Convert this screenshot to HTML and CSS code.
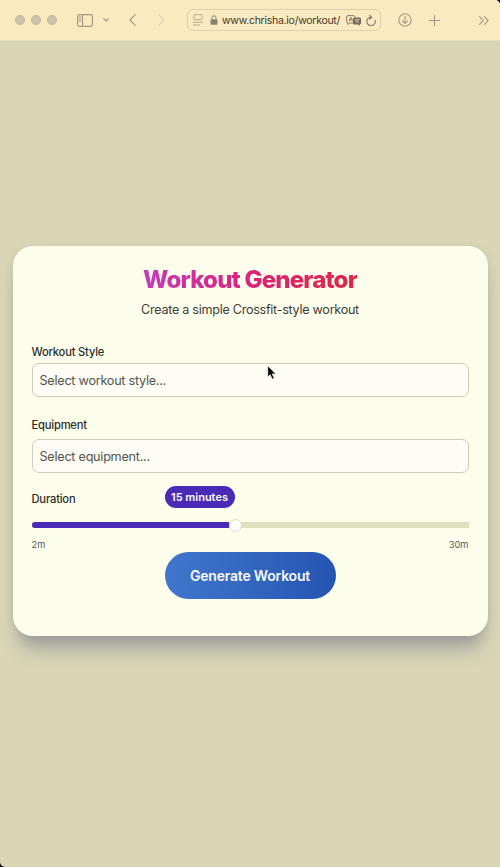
FILE: index.html
```html
<!DOCTYPE html>
<html lang="en">
<head>
<meta charset="utf-8">
<title>Workout Generator</title>
<link rel="stylesheet" href="styles.css">
</head>
<body>
<div class="window">
  <header class="toolbar">
    <div class="lights"><i></i><i></i><i></i></div>
    <svg class="sidebar" width="16" height="13" viewBox="0 0 16 13"><rect x=".6" y=".6" width="14.8" height="11.8" rx="1.8"/><path d="M5.5 .6v11.8M2.3 3h1.5M2.3 5h1.5M2.3 7h1.5"/></svg>
    <svg class="caret" width="6" height="4" viewBox="0 0 6 4"><path d="M.7 .7 3 3 5.3 .7"/></svg>
    <svg class="back" width="7" height="12" viewBox="0 0 7 12"><path d="M6.2 .6 1 6l5.200 5.400"/></svg>
    <svg class="forward" width="7" height="12" viewBox="0 0 7 12"><path d="M.8.6 6 6 .8 11.400"/></svg>
    <div class="address">
      <svg class="reader" width="10" height="12" viewBox="0 0 10 12"><rect x=".9" y=".6" width="8.200" height="5" rx="1"/><path d="M.2 8.300h9.600M.2 11h6.300"/></svg>
      <svg class="lock" width="8" height="10" viewBox="0 0 8 10"><rect x=".5" y="4.300" width="7" height="5.500" rx="1"/><path d="M2 5V2.900a2 2 0 0 1 4 0V5"/></svg>
      <span class="url">www.chrisha.io/workout/</span>
      <svg class="translate" width="16" height="11" viewBox="0 0 16 11"><path d="M7 8H3.500L2 9.500V8a1.500 1.500 0 0 1-1.400-1.500v-4.500A1.500 1.500 0 0 1 2 .6h5.500A1.500 1.500 0 0 1 9 2M3 6.200l1.800-4 1.400 3M3.600 5h2.500"/><path class="fill" d="M8.500 2.500h5A1.500 1.500 0 0 1 15 4v4a1.500 1.500 0 0 1-1.300 1.500v1.300L12 9.500H8.500A1.500 1.500 0 0 1 7 8V4a1.500 1.500 0 0 1 1.500-1.500z"/><path class="mark" d="M8.800 4.800h4.500M11 3.800v1M9.500 8l3-3M9.700 5.500 12.800 8"/></svg>
      <svg class="reload" width="10" height="11" viewBox="0 0 10 11"><path d="M9.100 5.300A4.200 4.200 0 1 1 5.400 2.300M3.700.5l2 1.900-2 1.900"/></svg>
    </div>
    <svg class="download" width="14" height="14" viewBox="0 0 14 14"><circle cx="7" cy="7" r="6.200"/><path d="M7 3.300v7M4.400 7.800 7 10.400l2.600-2.600"/></svg>
    <svg class="plus" width="11" height="11" viewBox="0 0 11 11"><path d="M5.500 .3v10.400M.3 5.500h10.400"/></svg>
    <svg class="more" width="10" height="9" viewBox="0 0 10 9"><path d="m.6.600 3.700 3.900L.6 8.400M5.400.600l3.700 3.900-3.700 3.900"/></svg>
  </header>
  <main class="page">
    <section class="card">
      <h1><span>Workout Generator</span></h1>
      <p class="subtitle">Create a simple Crossfit-style workout</p>
      <div class="field">
        <label>Workout Style</label>
        <div class="select">Select workout style...</div>
      </div>
      <div class="field equipment">
        <label>Equipment</label>
        <div class="select">Select equipment...</div>
      </div>
      <div class="duration"><label>Duration</label><span class="badge">15 minutes</span></div>
      <div class="track"><div class="progress"></div><div class="thumb"></div></div>
      <div class="limits"><span>2m</span><span>30m</span></div>
      <button>Generate Workout</button>
    </section>
  </main>
  <svg class="cursor" width="10" height="15" viewBox="0 0 10 15"><path d="M.7.800v11.300l2.500-2.300 2 4.400 2.100-.9-2-4.300h3.500z"/></svg>
</div>
</body>
</html>
```
FILE: styles.css
```css
* { box-sizing: border-box; }
html { background: #000; }
body { margin: 0; font-family: Inter, "Liberation Sans", sans-serif; color: #333; }
.window { position: relative; width: 500px; height: 867px; border-radius: 0 5px 0 5px; overflow: hidden; background: #d8d6b5; display: flex; flex-direction: column; }
svg { display: block; flex: none; fill: none; stroke: #a39885; stroke-width: 1.1; stroke-linecap: round; stroke-linejoin: round; }
.toolbar { height: 41px; flex: none; display: flex; align-items: center; padding: 0 11px 0 15px; background: #fbe9c0; border-bottom: 1px solid #e7dcb9; }
.lights { display: flex; gap: 6px; }
.lights i { width: 10px; height: 10px; border-radius: 50%; background: #cdc2ac; border: 1px solid #bfb49f; }
.sidebar { margin-left: 20px; }
.caret { margin-left: 10px; }
.back { margin-left: 20px; }
.forward { margin-left: 22px; stroke: #dccfb5; }
.address { width: 194px; height: 22px; margin-left: 22px; border: 1px solid #decfae; border-radius: 6px; display: flex; align-items: center; padding: 0 4px 0 5px; font-size: 10.500px; letter-spacing: -.27px; color: #3f392f; }
.reader { stroke: #b5aa93; stroke-width: 1; }
.lock { margin-left: 7px; }
.lock rect { fill: #8c8272; stroke: none; }
.url { margin-left: 4px; width: 118px; white-space: nowrap; }
.translate { margin-left: 6px; stroke-width: .9; stroke: #7b7265; }
.translate .fill { fill: #706759; stroke: none; }
.translate .mark { stroke: #e8dabc; stroke-width: .7; }
.reload { margin-left: 4px; stroke: #81786a; }
.download { margin-left: 17px; }
.plus { margin-left: 17px; }
.more { margin-left: auto; }
.page { flex: 1; padding: 205px 12.500px 0; }
.card { height: 390px; border-radius: 20px; background: #fdfdec; padding: 19px 19px 0; box-shadow: 0 20px 18px -7px rgba(105,105,135,.45), 0 3px 9px rgba(110,110,125,.2); display: flex; flex-direction: column; }
h1 { margin: 0; height: 30px; line-height: 30px; font-size: 24px; font-weight: 800; letter-spacing: -.8px; text-align: center; white-space: nowrap; }
h1 span { background: linear-gradient(90deg,#c43bbd,#db247e 45%,#df2746); -webkit-background-clip: text; background-clip: text; color: transparent; }
.subtitle { margin: 5px 0 0; height: 18px; line-height: 20px; font-size: 12.600px; letter-spacing: -.28px; text-align: center; color: #3f4038; }
.field { margin-top: 25px; }
label { display: block; height: 16px; line-height: 18px; font-size: 11.200px; letter-spacing: -.2px; font-weight: 500; color: #2e2e2b; }
.select { margin-top: 4px; height: 34px; border: 1px solid #ccccb8; border-radius: 7px; background: #fdfdf5; padding: 0 7px; font-size: 12.700px; letter-spacing: -.28px; line-height: 33px; color: #56564e; }
.field.equipment { margin-top: 19px; }
.equipment .select { margin-top: 7px; }
.duration { display: flex; height: 22px; margin-top: 13px; align-items: flex-start; }
.duration label { width: 133px; padding-top: 5px; height: 22px; line-height: 17px; }
.badge { width: 70px; height: 22px; border-radius: 11px; background: #4a2bb8; color: #fffdf4; font-size: 11px; font-weight: 600; line-height: 22px; text-align: center; }
.track { display: flex; align-items: center; margin-top: 10px; height: 14px; border-radius: 3px; background: linear-gradient(#dfe0c0,#dfe0c0) center / 100% 6px no-repeat; }
.progress { width: 197px; height: 6px; background: #4a2bb8; border-radius: 3px 0 0 3px; }
.thumb { width: 13px; height: 13px; border-radius: 50%; background: #fffef8; border: 1px solid #dedfc8; }
.limits { display: flex; justify-content: space-between; height: 12px; margin-top: 7px; font-size: 9.300px; line-height: 12px; color: #595952; }
button { width: 171px; height: 47px; flex: none; margin: 1px 0 0 133px; border: 0; border-radius: 24px; padding: 0; background: linear-gradient(90deg,#4276cc,#2555b2); color: #f7f8f5; font: 600 14px Inter, sans-serif; letter-spacing: -.2px; }
.cursor { position: absolute; left: 267px; top: 365px; fill: #080808; stroke: #f7f7ec; stroke-width: .8; }
```
